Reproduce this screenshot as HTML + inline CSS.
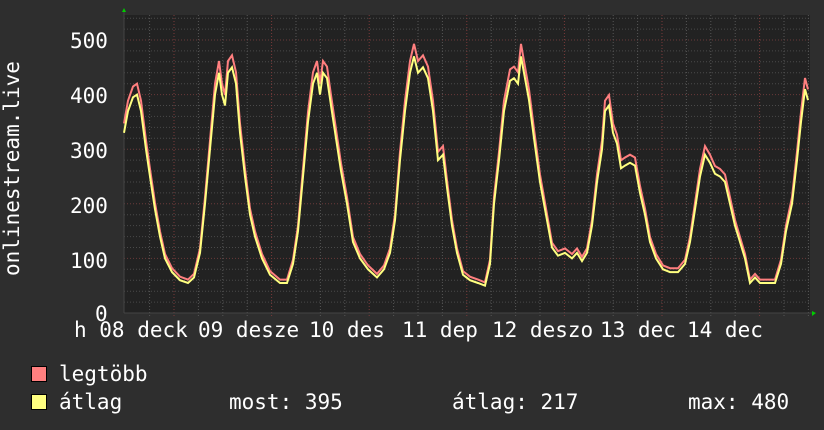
<!DOCTYPE html>
<html><head><meta charset="utf-8"><style>
html,body{margin:0;padding:0;background:#2e2e2e;}
body{width:824px;height:430px;overflow:hidden;position:relative;font-family:"DejaVu Sans Mono","Liberation Mono",monospace;color:#fff;}
.t{position:absolute;font-size:21px;line-height:21px;white-space:pre;}
.sw{position:absolute;width:14px;height:14px;border:1px solid #000;}
</style></head><body>
<svg id="g" width="824" height="430" style="position:absolute;left:0;top:0"></svg>
<div class="t" style="left:70px;top:31px">500</div>
<div class="t" style="left:70px;top:86px">400</div>
<div class="t" style="left:70px;top:141px">300</div>
<div class="t" style="left:70px;top:196px">200</div>
<div class="t" style="left:70px;top:251px">100</div>
<div class="t" style="left:95px;top:304px">0</div>
<div class="t" style="left:2px;top:276px;transform-origin:0 0;transform:rotate(-90deg);font-size:21px">onlinestream.live</div>
<div class="t" style="left:74px;top:320px">h 08 deck</div>
<div class="t" style="left:198px;top:320px">09 desze</div>
<div class="t" style="left:309px;top:320px">10 des</div>
<div class="t" style="left:402px;top:320px">11 dep</div>
<div class="t" style="left:492px;top:320px">12 deszo</div>
<div class="t" style="left:600px;top:320px">13 dec</div>
<div class="t" style="left:687px;top:320px">14 dec</div>
<div class="sw" style="left:31px;top:366px;background:#ff7f7f"></div>
<div class="sw" style="left:31px;top:394px;background:#ffff80"></div>
<div class="t" style="left:59px;top:364px">legtöbb</div>
<div class="t" style="left:59px;top:392px">átlag</div>
<div class="t" style="left:229px;top:392px">most: 395</div>
<div class="t" style="left:452px;top:392px">átlag: 217</div>
<div class="t" style="left:688px;top:392px">max: 480</div>
<script>
var s=document.getElementById('g'),h='';
var X0=124,X1=810,Y0=313,K=0.546;
function y(v){return Y0-v*K;}
h+='<rect x="'+X0+'" y="15" width="'+(X1-X0)+'" height="'+(Y0-15)+'" fill="#222"/>';
for(var v=20;v<=540;v+=20){var yy=y(v).toFixed(1);h+='<line x1="'+X0+'" x2="'+X1+'" y1="'+yy+'" y2="'+yy+'" stroke="'+(v%100?'#4a4a4a':'#6a3a3a')+'" stroke-dasharray="1,2"/>';}
for(var x=149.6;x<X1;x+=24.4){var mj=Math.abs(((x-174)/97.6)-Math.round((x-174)/97.6))<0.05;h+='<line x1="'+x.toFixed(1)+'" x2="'+x.toFixed(1)+'" y1="15" y2="'+(Y0+3)+'" stroke="'+(mj?'#7a3a3a':'#555')+'" stroke-dasharray="1,2"/>';}
h+='<line x1="'+X0+'" x2="'+(X1+3)+'" y1="'+Y0+'" y2="'+Y0+'" stroke="#444"/>';
h+='<line x1="'+X0+'" x2="'+X0+'" y1="12" y2="'+Y0+'" stroke="#444"/>';
h+='<polygon points="122,12 126,12 124,8" fill="#0c0"/><polygon points="812,311 812,316 816,313" fill="#0c0"/>';
var p=[124,330,128,370,133,395,137,400,141,370,146,300,150,250,155,190,160,140,165,100,172,75,180,60,188,55,194,65,200,110,205,200,210,300,215,400,219,440,222,400,225,380,228,440,232,450,236,420,240,330,245,250,250,180,255,140,262,100,270,70,280,55,287,55,293,90,298,150,303,250,308,350,313,420,317,440,320,400,323,440,327,430,331,380,336,320,341,260,347,200,353,130,360,100,368,80,377,65,384,80,390,110,395,170,400,280,405,370,410,440,414,470,418,440,423,450,428,430,433,370,438,280,443,290,447,230,452,160,457,110,463,70,470,60,478,55,485,50,490,90,494,200,499,280,504,370,510,425,514,430,518,420,521,470,524,440,529,390,534,320,540,240,546,180,552,120,558,105,565,110,572,100,577,110,582,95,587,110,592,160,597,240,602,300,605,370,609,380,613,330,617,310,621,265,625,270,630,275,635,270,640,220,645,180,650,130,656,100,663,80,670,75,678,75,685,90,690,130,695,190,700,250,705,290,710,275,715,255,720,250,725,240,730,200,735,160,740,130,745,100,750,55,755,65,760,55,768,55,775,55,781,90,786,150,792,200,797,280,801,350,805,410,808,390];
var a='',m='';
for(var i=0;i<p.length;i+=2){a+=p[i]+','+y(p[i+1]).toFixed(1)+' ';m+=p[i]+','+y(p[i+1]*1.04+4).toFixed(1)+' ';}
h+='<polyline points="'+m+'" fill="none" stroke="#ff7f7f" stroke-width="2"/>';
h+='<polyline points="'+a+'" fill="none" stroke="#ffff80" stroke-width="2"/>';
s.innerHTML=h;
</script>
</body></html>
